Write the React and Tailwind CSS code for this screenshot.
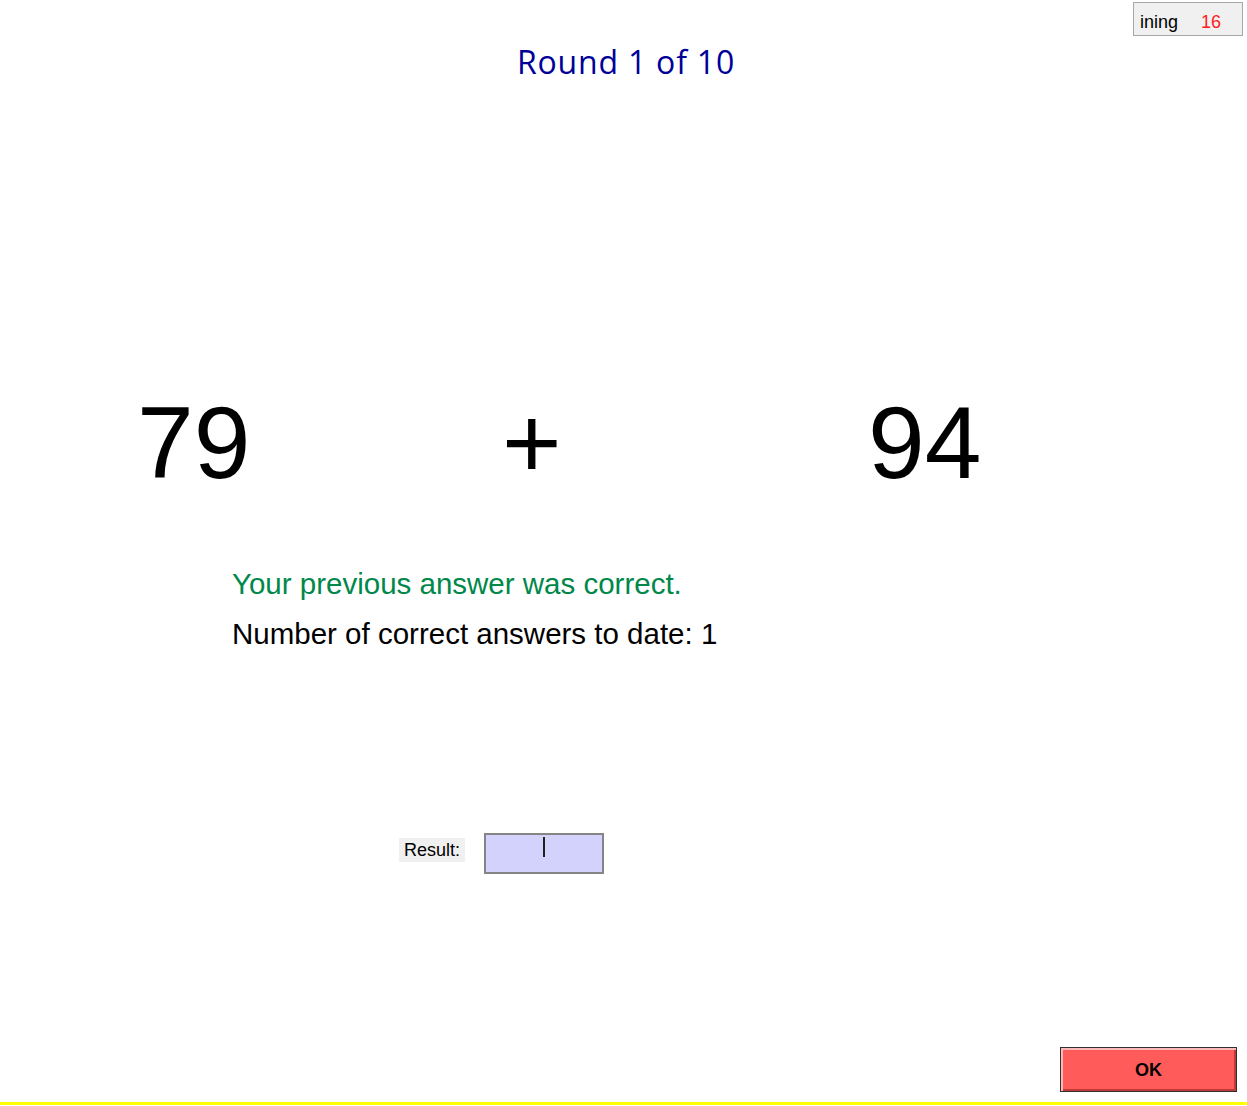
import React, { useState } from "react"

const App = () => {
    const [round] = useState({ current: 1, total: 10 })
    const [timeLeft] = useState(16)
    const [operands] = useState({ a: 79, b: 94, op: "+" })
    const [correctCount] = useState(1)

    return (
        <div className="w-[1247px] h-[1106px] flex flex-col bg-white text-black font-['Liberation_Sans',Arial,sans-serif]">
            {/* Timer badge */}
            <div className="flex justify-end pt-[2px] pr-[4px]">
                <div className="w-[110px] h-[34px] border border-[#a8a8a8] bg-[#f0f0f0] flex items-center pl-[6px] pt-[6px] text-[18px] leading-none">
                    <span className="text-black">ining</span>
                    <span className="ml-[23px] text-[#ff2020]">{timeLeft}</span>
                </div>
            </div>

            {/* Round title */}
            <div className="mt-[10px] pl-[5px] text-center text-[32px] leading-none tracking-[0.8px] text-[#000099] font-['Open_Sans',sans-serif]">
                Round {round.current} of {round.total}
            </div>

            {/* Sum */}
            <div className="mt-[314px] flex pl-[137px] text-[102px] leading-none">
                <span className="w-[365px]">{operands.a}</span>
                <span className="w-[366px]">{operands.op}</span>
                <span>{operands.b}</span>
            </div>

            {/* Feedback */}
            <div className="mt-[75px] pl-[232px] text-[29.5px] leading-none text-[#00884a]">
                Your previous answer was correct.
            </div>
            <div className="mt-[20px] pl-[232px] text-[29.5px] leading-none">
                Number of correct answers to date: {correctCount}
            </div>

            {/* Answer input */}
            <div className="mt-[185px] flex items-start pl-[399px]">
                <div className="mt-[5px] w-[66px] h-[24px] bg-[#f0f0f0] flex items-center justify-center text-[18px] leading-none">
                    Result:
                </div>
                <div className="ml-[19px] w-[120px] h-[41px] border-2 border-[#858585] bg-[#d2d2fd] flex justify-center pt-[2px]">
                    <div className="w-[2px] h-[20px] bg-[#202020]" />
                </div>
            </div>

            <div className="flex-1" />

            {/* OK button */}
            <div className="flex justify-end pr-[10px]">
                <button className="w-[177px] h-[45px] border border-[#303030] bg-[#ff5b5b] shadow-[inset_2px_2px_0_#ffb8b8,inset_-2px_-2px_0_#c03838] text-[18px] font-bold leading-none">
                    OK
                </button>
            </div>

            <div className="mt-[10px] h-[3px] bg-[#ffff00]" />
            <div className="h-[1px]" />
        </div>
    )
}

export default App
